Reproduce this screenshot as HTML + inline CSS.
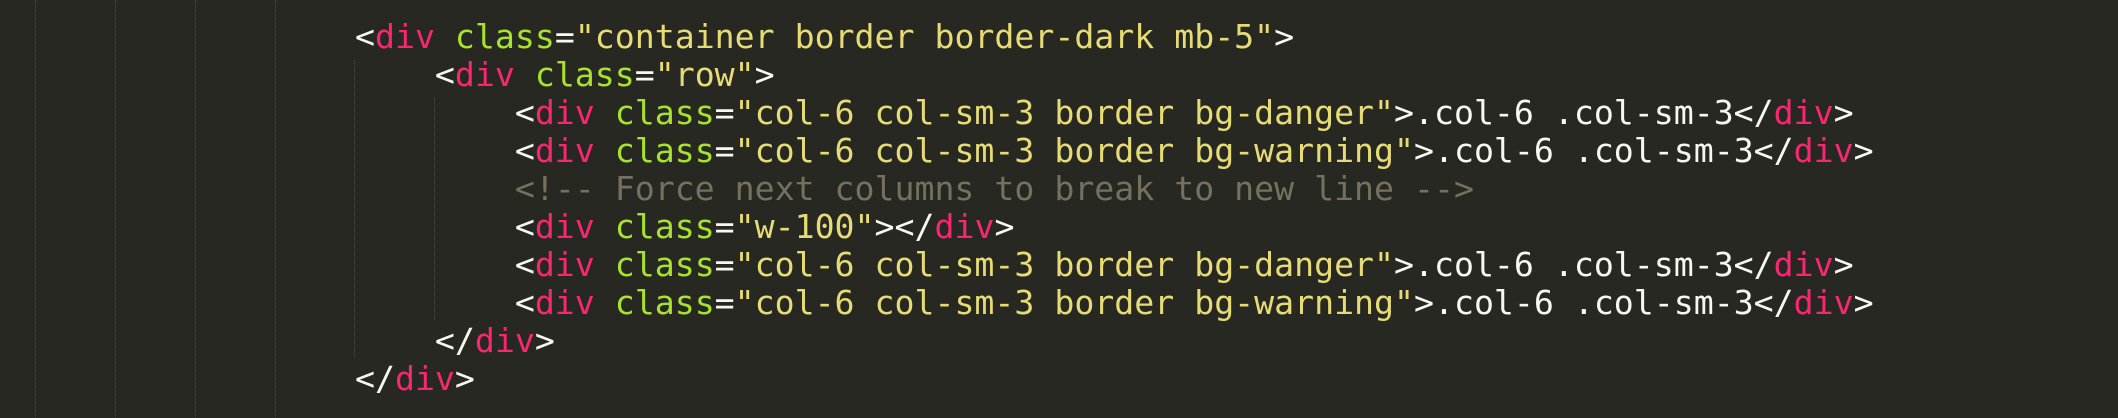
<!DOCTYPE html>
<html><head><meta charset="utf-8"><style>
html,body{margin:0;padding:0;}
body{width:2118px;height:418px;background:#272822;position:relative;overflow:hidden;}
.g{position:absolute;width:0;border-left:1px dotted #4a4b44;}
pre{position:absolute;left:355px;top:18px;margin:0;font-family:"DejaVu Sans Mono","Liberation Mono",monospace;font-size:33.2px;line-height:38px;color:#f8f8f2;}
.t{color:#f92672}.a{color:#a6e22e}.s{color:#e6db74}.c{color:#75715e}
</style></head><body>
<div class="g" style="left:35px;top:0;height:418px"></div>
<div class="g" style="left:115px;top:0;height:418px"></div>
<div class="g" style="left:195px;top:0;height:418px"></div>
<div class="g" style="left:275px;top:0;height:418px"></div>
<div class="g" style="left:354px;top:60px;height:298px"></div>
<div class="g" style="left:434px;top:98px;height:222px"></div>
<pre>&lt;<span class="t">div</span> <span class="a">class</span>=<span class="s">"container border border-dark mb-5"</span>&gt;
    &lt;<span class="t">div</span> <span class="a">class</span>=<span class="s">"row"</span>&gt;
        &lt;<span class="t">div</span> <span class="a">class</span>=<span class="s">"col-6 col-sm-3 border bg-danger"</span>&gt;.col-6 .col-sm-3&lt;/<span class="t">div</span>&gt;
        &lt;<span class="t">div</span> <span class="a">class</span>=<span class="s">"col-6 col-sm-3 border bg-warning"</span>&gt;.col-6 .col-sm-3&lt;/<span class="t">div</span>&gt;
        <span class="c">&lt;!-- Force next columns to break to new line --&gt;</span>
        &lt;<span class="t">div</span> <span class="a">class</span>=<span class="s">"w-100"</span>&gt;&lt;/<span class="t">div</span>&gt;
        &lt;<span class="t">div</span> <span class="a">class</span>=<span class="s">"col-6 col-sm-3 border bg-danger"</span>&gt;.col-6 .col-sm-3&lt;/<span class="t">div</span>&gt;
        &lt;<span class="t">div</span> <span class="a">class</span>=<span class="s">"col-6 col-sm-3 border bg-warning"</span>&gt;.col-6 .col-sm-3&lt;/<span class="t">div</span>&gt;
    &lt;/<span class="t">div</span>&gt;
&lt;/<span class="t">div</span>&gt;</pre>
</body></html>
